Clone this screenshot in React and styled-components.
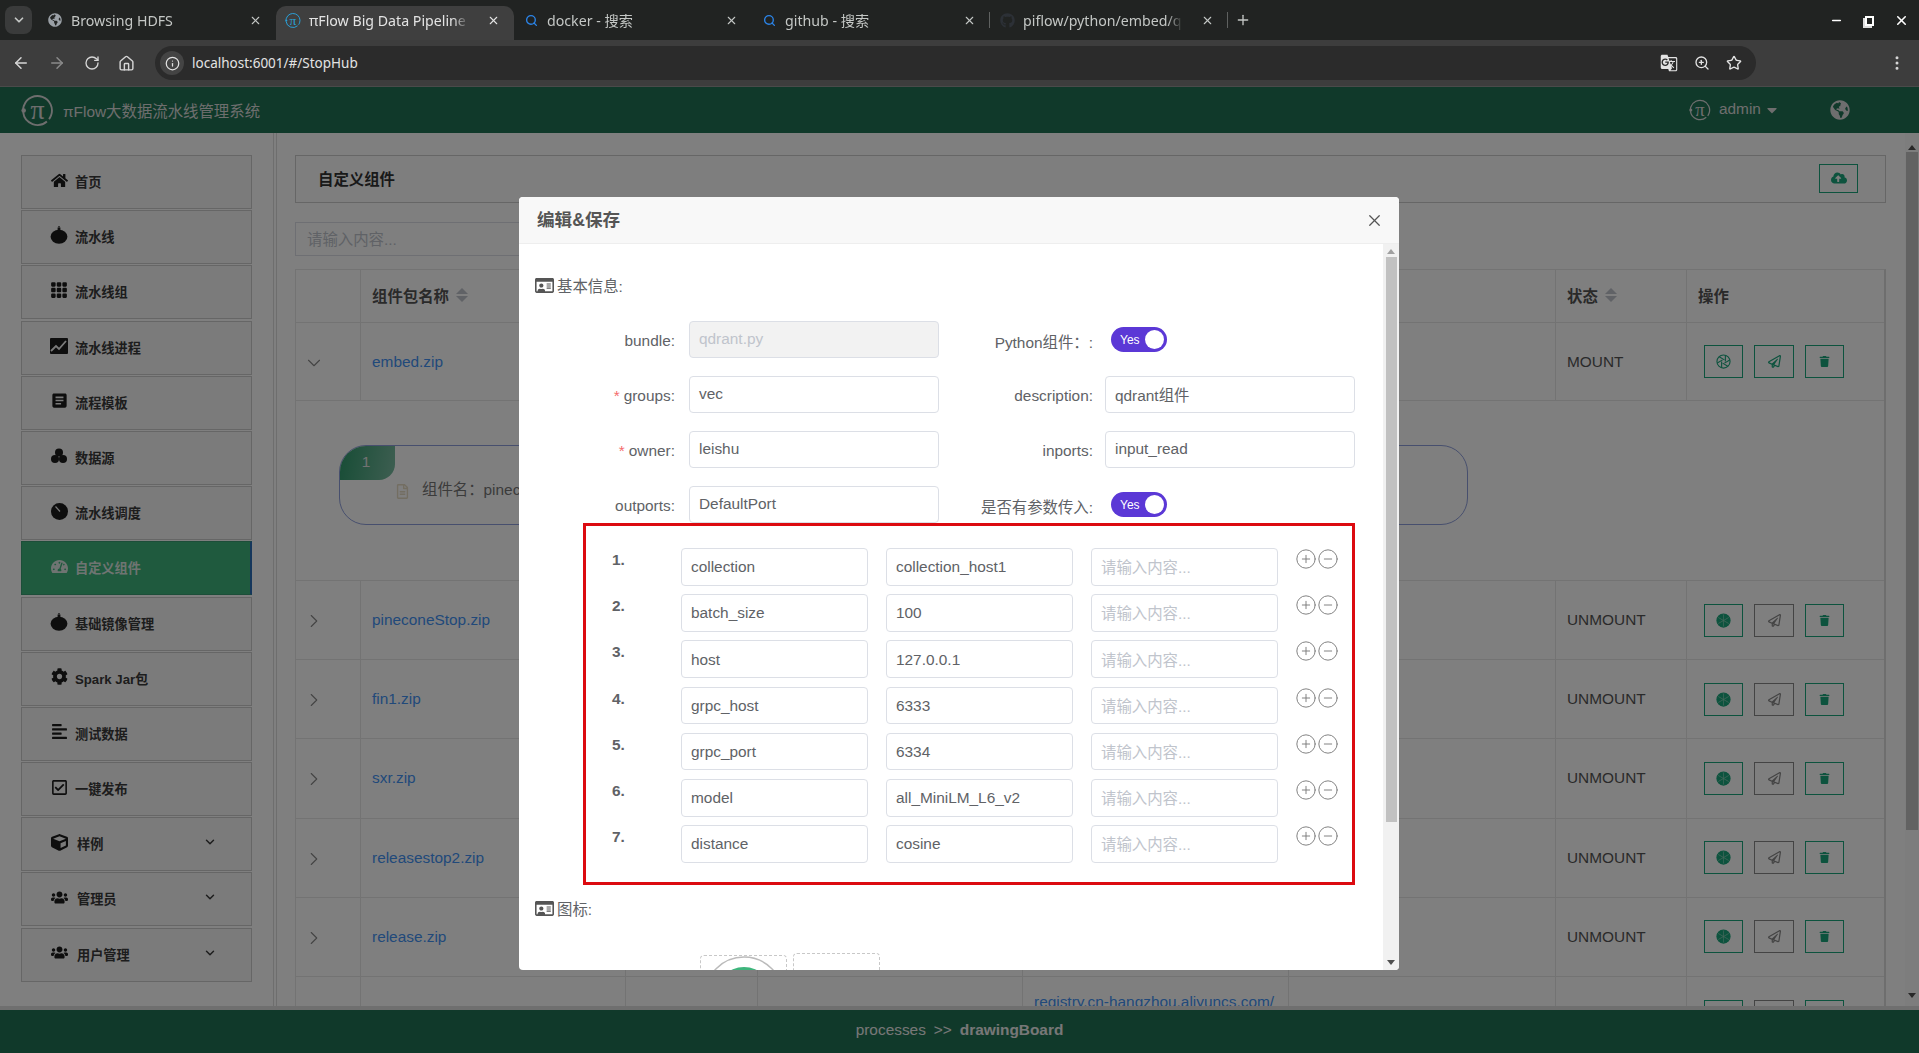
import styled, { createGlobalStyle } from "styled-components";
import {
  ArrowLeft, ArrowRight, RotateCw, House, Info, ZoomIn, Star, EllipsisVertical, Search, X, Plus, Minus,
  ChevronDown, ChevronRight, CirclePlus, CircleMinus,
} from "lucide-react";
import {
  FaHome, FaCube, FaUsers, FaCog, FaAlignLeft, FaRegCheckSquare, FaTachometerAlt,
  FaCloudUploadAlt, FaRegPaperPlane, FaTrash, FaRegIdCard, FaGlobeAmericas, FaCaretDown, FaGithub, FaRegFileAlt,
} from "react-icons/fa";
import { BsGrid3X3GapFill } from "react-icons/bs";
import { MdArticle, MdGTranslate } from "react-icons/md";

const SANS = `"Liberation Sans", "Noto Sans CJK SC", sans-serif`;
const GREEN = "#1aa67c";

const GlobalStyle = createGlobalStyle`
  html, body { margin: 0; padding: 0; overflow: hidden; background: #fff; }
  * { box-sizing: border-box; }
`;

const Page = styled.div`
  width: 1919px;
  height: 1053px;
  overflow: hidden;
  font-family: ${SANS};
  display: flex;
  flex-direction: column;
`;

/* browser chrome */
const TabStrip = styled.div`
  height: 40px;
  background: #212322;
  display: flex;
  align-items: flex-end;
  padding-left: 5px;
  font-family: "Noto Sans", "Noto Sans CJK SC", sans-serif;
  font-size: 14.2px;
  color: #c4c7c5;
`;
const TabMenu = styled.div`
  width: 27px;
  height: 28px;
  margin: 0 6px 6px 0;
  border-radius: 8px;
  background: #3a3b3b;
  display: flex;
  align-items: center;
  justify-content: center;
`;
const Tab = styled.div`
  width: 238px;
  height: 34px;
  display: flex;
  align-items: center;
  position: relative;
  padding: 0 0 6px 9px;
  border-radius: 10px 10px 0 0;
  background: ${(p) => (p.$active ? "#3f3f3f" : "transparent")};
  color: ${(p) => (p.$active ? "#e3e3e3" : "#c4c7c5")};
  &::after {
    content: "";
    display: ${(p) => (p.$sep ? "block" : "none")};
    position: absolute;
    right: 0;
    top: 6px;
    height: 16px;
    width: 1px;
    background: #5f6160;
  }
`;
const TabIcon = styled.span`
  width: 16px;
  height: 16px;
  display: flex;
  align-items: center;
  justify-content: center;
  margin-right: 8px;
  flex: none;
`;
const TabTitle = styled.span`
  width: 160px;
  flex: none;
  white-space: nowrap;
  overflow: hidden;
  -webkit-mask-image: linear-gradient(to right, #000 90%, transparent);
  mask-image: linear-gradient(to right, #000 90%, transparent);
`;
const TabClose = styled.span`
  margin-left: 18px;
  display: flex;
`;
const NewTab = styled.div`
  margin: 0 0 12px 7px;
  display: flex;
`;
const WindowControls = styled.div`
  margin: 0 10px 12px auto;
  display: flex;
  gap: 20px;
  align-items: center;
  color: #fff;
`;
const RestoreIcon = styled.span`
  width: 9px;
  height: 10px;
  border: 2px solid #fff;
  box-shadow: -2px 2px 0 #ddd;
  margin-left: 2px;
`;
const Toolbar = styled.div`
  height: 47px;
  background: #3d3d3d;
  border-bottom: 1px solid #4a4a4a;
  display: flex;
  align-items: center;
  padding-left: 12px;
  color: #d6d6d6;
`;
const NavIcons = styled.div`
  display: flex;
  gap: 18px;
  width: 143px;
  align-items: center;
`;
const Omnibox = styled.div`
  width: 1601px;
  height: 34px;
  border-radius: 17px;
  background: #2b2b2b;
  display: flex;
  align-items: center;
  padding: 0 14px 0 5px;
  color: #e3e3e3;
`;
const InfoBubble = styled.div`
  width: 24px;
  height: 24px;
  border-radius: 50%;
  background: #444;
  display: flex;
  align-items: center;
  justify-content: center;
  margin-right: 8px;
`;
const Url = styled.span`
  font-family: "Noto Sans", sans-serif;
  font-size: 13.5px;
  flex: 1;
`;
const OmniIcons = styled.div`
  display: flex;
  gap: 16px;
  align-items: center;
`;
const MoreBtn = styled.div`
  margin-left: 132px;
  display: flex;
`;

/* the app below the chrome */
const Viewport = styled.div`
  position: relative;
  height: 966px;
  overflow: hidden;
  display: flex;
  flex-direction: column;
`;
const AppHeader = styled.header`
  height: 46px;
  flex: none;
  background: #217355;
  color: #dcdcdc;
  display: flex;
  align-items: center;
  padding-left: 21px;
  font-size: 15.4px;
`;
const AppTitle = styled.span`
  margin-left: 9px;
  padding-bottom: 1px;
`;
const UserArea = styled.div`
  margin-left: auto;
  display: flex;
  align-items: center;
  width: 230px;
  font-size: 15.4px;
`;
const UserName = styled.span`
  margin: 0 3px 2px 8px;
`;
const GlobeWrap = styled.span`
  margin-left: 50px;
  display: flex;
`;
const Middle = styled.div`
  flex: 1;
  display: flex;
  min-height: 0;
  background: #fff;
  border-bottom: 4px solid #dedede;
`;
const Sidebar = styled.nav`
  width: 273px;
  flex: none;
  padding: 22px 0 0 21px;
  display: flex;
  flex-direction: column;
  gap: 1.2px;
`;
const NavItem = styled.div`
  width: 231px;
  height: 54px;
  flex: none;
  display: flex;
  align-items: center;
  padding: 0 0 1px 27px;
  border: 1px solid ${(p) => (p.$active ? "#3a9c72" : "#ccc")};
  border-right: ${(p) => (p.$active ? "2px solid #2a6fb8" : "1px solid #ccc")};
  background: ${(p) => (p.$active ? "#3eb57c" : "#f6f6f6")};
  color: ${(p) => (p.$active ? "#dfe9e4" : "#3a3a3a")};
  font-size: 13.2px;
  font-weight: 700;
`;
const NavIcon = styled.span`
  width: 20px;
  height: 20px;
  display: flex;
  align-items: center;
  justify-content: center;
  margin: -3px 6px 0 0;
  color: ${(p) => (p.$active ? "#dfe9e4" : "#1c1c1c")};
  font-size: 17px;
`;
const NavCaret = styled.span`
  margin: -3px 0 0 auto;
  padding-right: 34px;
  display: flex;
`;
const SubLabel = styled.span`
  margin-left: 2px;
`;
const Divider = styled.div`
  width: 4px;
  flex: none;
  border-left: 1px solid #ddd;
  border-right: 1px solid #ddd;
`;
const Main = styled.main`
  flex: 1;
  min-width: 0;
  padding: 22px 19px 0 18px;
  overflow: hidden;
`;
const TitlePanel = styled.div`
  height: 48px;
  border: 1px solid #ccc;
  background: #fcfcfc;
  display: flex;
  align-items: center;
  justify-content: space-between;
  padding: 0 27px 2px 22px;
  font-size: 15.4px;
  font-weight: 700;
  color: #333;
`;
const OutlineBtn = styled.div`
  width: ${(p) => p.$w || 39}px;
  height: ${(p) => p.$h || 33}px;
  border: 1px solid ${(p) => (p.$plain ? "#888" : GREEN)};
  color: ${(p) => (p.$plain ? "#888" : GREEN)};
  display: flex;
  align-items: center;
  justify-content: center;
  font-size: 13px;
  flex: none;
`;
const SearchBox = styled.div`
  width: 320px;
  height: 34px;
  margin-top: 19px;
  border: 1px solid #dcdfe6;
  padding: 0 0 2px 11px;
  display: flex;
  align-items: center;
  font-size: 15.4px;
  color: #c0c4cc;
`;
const Table = styled.div`
  margin-top: 13px;
  border-top: 1px solid #e6e6e6;
  border-left: 1px solid #e6e6e6;
  border-right: 2px solid #dcdcdc;
  color: #555;
  font-size: 15.4px;
`;
const Row = styled.div`
  display: grid;
  grid-template-columns: 64px 265px 132px 265px 266px 267px 131px 1fr;
  height: ${(p) => p.$h}px;
  border-bottom: 1px solid #e6e6e6;
`;
const Cell = styled.div`
  display: flex;
  align-items: ${(p) => (p.$top ? "flex-start" : "center")};
  padding: ${(p) => (p.$top ? "16px 11px 0" : "0 11px")};
  border-left: ${(p) => (p.$first ? "none" : "1px solid #e6e6e6")};
`;
const HeadCell = styled(Cell)`
  font-weight: 700;
  color: #555;
  padding-bottom: 2px;
`;
const SortCaret = styled.span`
  display: inline-flex;
  flex-direction: column;
  gap: 2px;
  margin-left: 7px;
  &::before, &::after {
    content: "";
    width: 0;
    height: 0;
    border-left: 6px solid transparent;
    border-right: 6px solid transparent;
  }
  &::before { border-bottom: 6px solid #c0c4cc; }
  &::after { border-top: 6px solid #c0c4cc; }
`;
const ExpandCell = styled(Cell)`
  padding: 2px 0 0 7px;
  color: #888;
`;
const FileLink = styled.a`
  color: #4393f5;
  white-space: nowrap;
`;
const Actions = styled(Cell)`
  gap: 11px;
  padding: ${(p) => (p.$top ? "23px 0 0 17px" : "0 0 0 17px")};
`;
const ExpandRow = styled.div`
  height: 180px;
  padding: 44px 0 0 43px;
  border-bottom: 1px solid #e6e6e6;
`;
const StopCard = styled.div`
  width: 1129px;
  height: 80px;
  border: 1px solid #8f9fdc;
  border-radius: 27px;
  overflow: hidden;
  color: #777;
`;
const CardBadge = styled.div`
  width: 55px;
  height: 34px;
  background: linear-gradient(100deg, #2f9a6c, #7cbda3);
  border-bottom-right-radius: 16px;
  color: #e4e4e4;
  display: flex;
  align-items: center;
  justify-content: center;
  padding: 0 3px 2px 0;
`;
const CardLine = styled.div`
  display: flex;
  align-items: center;
  gap: 12px;
  margin: -3px 0 0 55px;
`;
const DocIcon = styled.span`
  color: #e7dcc4;
  display: flex;
  font-size: 15px;
  margin-top: 6px;
`;
const PageScroll = styled.div`
  width: 14px;
  flex: none;
  display: flex;
  flex-direction: column;
  align-items: center;
  background: #fbfbfb;
  padding-top: 12px;
`;
const Arrow = styled.span`
  width: 0;
  height: 0;
  border-left: 4px solid transparent;
  border-right: 4px solid transparent;
  border-${(p) => (p.$up ? "bottom" : "top")}: 5px solid ${(p) => p.$c || "#505050"};
`;
const PageThumb = styled.div`
  width: 12px;
  height: 678px;
  margin: 2px 0 auto;
  background: #c4c4c4;
`;
const PageArrowDown = styled(Arrow)`
  margin-bottom: 8px;
`;
const AppFooter = styled.footer`
  height: 43px;
  flex: none;
  background: #217355;
  color: #efefef;
  display: flex;
  align-items: center;
  justify-content: center;
  gap: 8px;
  padding-bottom: 3px;
  font-size: 15.4px;
`;
const Crumb = styled.b`
  font-weight: 700;
`;

/* dialog over the page */
const Backdrop = styled.div`
  position: absolute;
  inset: 0;
  background: rgba(0, 0, 0, 0.5);
`;
const Modal = styled.div`
  position: absolute;
  left: 519px;
  top: 110px;
  width: 880px;
  height: 773px;
  background: #fff;
  border-radius: 4px;
  overflow: hidden;
  display: flex;
  flex-direction: column;
  color: #606266;
  font-size: 15.4px;
`;
const ModalHead = styled.div`
  height: 47px;
  flex: none;
  background: #f8f8f8;
  border-bottom: 1px solid #eee;
  display: flex;
  align-items: center;
  justify-content: space-between;
  padding: 0 15px 3px 18px;
  font-size: 17.6px;
  font-weight: 700;
  color: #555;
`;
const CloseIcon = styled.span`
  display: flex;
  margin-top: 3px;
`;
const ModalBody = styled.div`
  flex: 1;
  min-height: 0;
  display: flex;
`;
const ModalContent = styled.div`
  flex: 1;
  min-width: 0;
  padding: 29px 0 0 16px;
  overflow: hidden;
`;
const SectionTitle = styled.div`
  height: 24px;
  display: flex;
  align-items: center;
  gap: 3px;
  color: #606266;
`;
const SectionIcon = styled.span`
  display: flex;
  font-size: 19px;
  color: #555;
`;
const FormGrid = styled.div`
  display: grid;
  grid-template-columns: 154px 250px 166px 250px;
  grid-auto-rows: 37px;
  row-gap: 18px;
  margin-top: 24px;
`;
const FieldLabel = styled.label`
  display: flex;
  align-items: center;
  justify-content: flex-end;
  padding: 3px ${(p) => (p.$right ? 12 : 14)}px 0 0;
  white-space: nowrap;
`;
const Required = styled.span`
  color: #f56c6c;
  margin-right: 4px;
`;
const Field = styled.div`
  height: ${(p) => p.$h || 37}px;
  border: 1px solid #dcdfe6;
  border-radius: 4px;
  background: ${(p) => (p.$disabled ? "#f2f2f2" : "#fff")};
  color: ${(p) => (p.$disabled || p.$empty ? "#c0c4cc" : "#606266")};
  padding: 0 9px 1px;
  display: flex;
  align-items: center;
  white-space: nowrap;
  overflow: hidden;
`;
const ParamField = styled(Field)`
  height: 37.6px;
  padding: ${(p) => (p.$empty ? "0 9px 1px" : "1px 9px 0")};
`;
const Toggle = styled.div`
  width: 56px;
  height: 25px;
  margin: 6px 0 0 6px;
  border-radius: 13px;
  background: #5b38d6;
  color: #fff;
  font-size: 12px;
  display: flex;
  align-items: center;
  justify-content: space-between;
  padding: 0 3px 0 9px;
  &::after {
    content: "";
    width: 19px;
    height: 19px;
    border-radius: 50%;
    background: #fff;
  }
`;
const ParamBox = styled.div`
  width: 772px;
  height: 362px;
  margin-left: 48px;
  border: 3px solid #dc0a10;
  padding: 22px 0 0 26px;
  display: flex;
  flex-direction: column;
  gap: 8.6px;
`;
const ParamRow = styled.div`
  display: flex;
  align-items: flex-start;
`;
const ParamNo = styled.div`
  width: 69px;
  line-height: 24px;
  font-weight: 700;
  color: #606266;
`;
const ParamInputs = styled.div`
  display: grid;
  grid-template-columns: repeat(3, 187px);
  column-gap: 18px;
`;
const ParamActions = styled.div`
  display: flex;
  margin: 0 0 0 17px;
  color: #777;
`;
const IconTitle = styled(SectionTitle)`
  margin-top: 11px;
`;
const Previews = styled.div`
  display: flex;
  align-items: flex-start;
  gap: 6px;
  margin: 33px 0 0 165px;
`;
const PreviewBox = styled.div`
  width: 87px;
  height: 87px;
  margin-top: ${(p) => p.$mt || 0}px;
  border: 1px dashed #c8c8c8;
  border-radius: 4px;
  display: flex;
  justify-content: center;
`;
const ModalScroll = styled.div`
  width: 16px;
  flex: none;
  background: #f1f1f1;
  display: flex;
  flex-direction: column;
  align-items: center;
  padding-top: 5px;
`;
const ModalThumb = styled.div`
  width: 11px;
  height: 565px;
  margin: 3px 0 auto;
  background: #c1c1c1;
`;
const ModalArrowDown = styled(Arrow)`
  margin-bottom: 5px;
`;

function Logo({ size = 32, ring = "currentColor" }) {
  return (
    <svg width={size} height={size} viewBox="0 0 32 32" fill="none">
      <circle cx="16" cy="16" r="14" stroke={ring} strokeWidth="1.8" strokeDasharray="26 3 30 3 26" transform="rotate(-70 16 16)" />
      <circle cx="2.6" cy="16" r="2.2" fill={ring} />
      <text x="16" y="24" textAnchor="middle" fontSize="27" fontFamily="Liberation Serif, serif" fill={ring}>π</text>
    </svg>
  );
}

function Aperture({ filled, size = 15 }) {
  const spokes = [0, 60, 120, 180, 240, 300];
  return (
    <svg width={size} height={size} viewBox="0 0 16 16">
      <circle cx="8" cy="8" r="7" fill={filled ? GREEN : "none"} stroke={GREEN} strokeWidth="1.2" />
      {spokes.map((deg) => (
        <line key={deg} x1="8" y1="8" x2="8" y2="1.5" transform={`rotate(${deg} 8 8) translate(${filled ? 0 : 2} 0)`}
          stroke={filled ? "#8fd0b8" : GREEN} strokeWidth={filled ? 0.7 : 1.2} />
      ))}
    </svg>
  );
}

function ChartIcon() {
  return (
    <svg width="18" height="16" viewBox="0 0 18 16">
      <rect width="18" height="16" rx="1" fill="currentColor" />
      <path d="M1 13l5-5 3 3 7-8" stroke="#f6f6f6" strokeWidth="1.8" fill="none" />
    </svg>
  );
}

function ThreeDots() {
  return (
    <svg width="16" height="16" viewBox="0 0 16 16" fill="currentColor">
      <circle cx="8" cy="4.6" r="4" />
      <circle cx="4" cy="11" r="4" />
      <circle cx="12" cy="11" r="4" />
    </svg>
  );
}

function ClockIcon() {
  return (
    <svg width="17" height="17" viewBox="0 0 17 17">
      <circle cx="8.5" cy="8.5" r="8.5" fill="currentColor" />
      <path d="M4.5 3.5l4.5 5" stroke="#f6f6f6" strokeWidth="1.2" />
    </svg>
  );
}

function BombIcon() {
  return (
    <svg width="18" height="18" viewBox="0 0 18 18" fill="currentColor">
      <ellipse cx="9" cy="10.8" rx="8.4" ry="7" />
      <rect x="7.6" y="1.5" width="2.8" height="3" />
      <circle cx="9" cy="0.8" r="0.8" />
    </svg>
  );
}

const navItems = [
  { label: "首页", icon: <FaHome /> },
  { label: "流水线", icon: <BombIcon /> },
  { label: "流水线组", icon: <BsGrid3X3GapFill size={18} /> },
  { label: "流水线进程", icon: <ChartIcon /> },
  { label: "流程模板", icon: <MdArticle size={19} /> },
  { label: "数据源", icon: <ThreeDots /> },
  { label: "流水线调度", icon: <ClockIcon /> },
  { label: "自定义组件", icon: <FaTachometerAlt />, active: true },
  { label: "基础镜像管理", icon: <BombIcon /> },
  { label: "Spark Jar包", icon: <FaCog /> },
  { label: "测试数据", icon: <FaAlignLeft /> },
  { label: "一键发布", icon: <FaRegCheckSquare /> },
  { label: "样例", icon: <FaCube />, sub: true },
  { label: "管理员", icon: <FaUsers />, sub: true },
  { label: "用户管理", icon: <FaUsers />, sub: true },
];

const zipRows = ["pineconeStop.zip", "fin1.zip", "sxr.zip", "releasestop2.zip", "release.zip"];

const params = [
  ["collection", "collection_host1"],
  ["batch_size", "100"],
  ["host", "127.0.0.1"],
  ["grpc_host", "6333"],
  ["grpc_port", "6334"],
  ["model", "all_MiniLM_L6_v2"],
  ["distance", "cosine"],
];

function RowActions({ mounted, top }) {
  return (
    <Actions $top={top}>
      <OutlineBtn><Aperture filled={!mounted} /></OutlineBtn>
      <OutlineBtn $w={40} $plain={!mounted}><FaRegPaperPlane /></OutlineBtn>
      <OutlineBtn><FaTrash size={11} /></OutlineBtn>
    </Actions>
  );
}

function ChromeBar() {
  return (
    <>
      <TabStrip>
        <TabMenu><ChevronDown size={14} strokeWidth={3} /></TabMenu>
        <Tab>
          <TabIcon><FaGlobeAmericas size={14} color="#9aa0a6" /></TabIcon>
          <TabTitle>Browsing HDFS</TabTitle>
          <TabClose><X size={13} strokeWidth={2} /></TabClose>
        </Tab>
        <Tab $active>
          <TabIcon><Logo size={17} ring="#2a9fd6" /></TabIcon>
          <TabTitle>πFlow Big Data Pipeline S</TabTitle>
          <TabClose><X size={13} strokeWidth={2} /></TabClose>
        </Tab>
        <Tab>
          <TabIcon><Search size={13} color="#2b84e8" strokeWidth={2.5} /></TabIcon>
          <TabTitle>docker - 搜索</TabTitle>
          <TabClose><X size={13} strokeWidth={2} /></TabClose>
        </Tab>
        <Tab $sep>
          <TabIcon><Search size={13} color="#2b84e8" strokeWidth={2.5} /></TabIcon>
          <TabTitle>github - 搜索</TabTitle>
          <TabClose><X size={13} strokeWidth={2} /></TabClose>
        </Tab>
        <Tab $sep>
          <TabIcon><FaGithub size={15} color="#2c3036" /></TabIcon>
          <TabTitle>piflow/python/embed/q</TabTitle>
          <TabClose><X size={13} strokeWidth={2} /></TabClose>
        </Tab>
        <NewTab><Plus size={16} strokeWidth={2} /></NewTab>
        <WindowControls>
          <Minus size={13} strokeWidth={3} />
          <RestoreIcon />
          <X size={15} strokeWidth={2.5} />
        </WindowControls>
      </TabStrip>
      <Toolbar>
        <NavIcons>
          <ArrowLeft size={18} />
          <ArrowRight size={18} color="#8a8a8a" />
          <RotateCw size={16} />
          <House size={17} />
        </NavIcons>
        <Omnibox>
          <InfoBubble><Info size={15} /></InfoBubble>
          <Url>localhost:6001/#/StopHub</Url>
          <OmniIcons>
            <MdGTranslate size={18} />
            <ZoomIn size={16} />
            <Star size={16} />
          </OmniIcons>
        </Omnibox>
        <MoreBtn><EllipsisVertical size={18} /></MoreBtn>
      </Toolbar>
    </>
  );
}

function SideNav() {
  return (
    <Sidebar>
      {navItems.map((item) => (
        <NavItem key={item.label} $active={item.active}>
          <NavIcon $active={item.active}>{item.icon}</NavIcon>
          {item.sub ? <SubLabel>{item.label}</SubLabel> : item.label}
          {item.sub && <NavCaret><ChevronDown size={14} strokeWidth={2.5} /></NavCaret>}
        </NavItem>
      ))}
    </Sidebar>
  );
}

function StopTable() {
  return (
    <Table>
      <Row $h={53}>
        <HeadCell $first />
        <HeadCell>组件包名称<SortCaret /></HeadCell>
        <HeadCell /><HeadCell /><HeadCell /><HeadCell />
        <HeadCell>状态<SortCaret /></HeadCell>
        <HeadCell>操作</HeadCell>
      </Row>
      <Row $h={78}>
        <ExpandCell $first><ChevronDown size={22} strokeWidth={1.2} /></ExpandCell>
        <Cell><FileLink>embed.zip</FileLink></Cell>
        <Cell /><Cell /><Cell /><Cell />
        <Cell>MOUNT</Cell>
        <RowActions mounted />
      </Row>
      <ExpandRow>
        <StopCard>
          <CardBadge>1</CardBadge>
          <CardLine>
            <DocIcon><FaRegFileAlt /></DocIcon>
            <span>组件名：pineconeStop</span>
          </CardLine>
        </StopCard>
      </ExpandRow>
      {zipRows.map((name) => (
        <Row key={name} $h={79.2}>
          <ExpandCell $first><ChevronRight size={22} strokeWidth={1.2} /></ExpandCell>
          <Cell><FileLink>{name}</FileLink></Cell>
          <Cell /><Cell /><Cell /><Cell />
          <Cell>UNMOUNT</Cell>
          <RowActions />
        </Row>
      ))}
      <Row $h={120}>
        <Cell $first /><Cell /><Cell /><Cell />
        <Cell $top><FileLink>registry.cn-hangzhou.aliyuncs.com/</FileLink></Cell>
        <Cell /><Cell />
        <RowActions top />
      </Row>
    </Table>
  );
}

function EditDialog() {
  return (
    <Modal>
      <ModalHead>
        编辑&保存
        <CloseIcon><X size={19} strokeWidth={1.6} color="#555" /></CloseIcon>
      </ModalHead>
      <ModalBody>
        <ModalContent>
          <SectionTitle><SectionIcon><FaRegIdCard /></SectionIcon>基本信息:</SectionTitle>
          <FormGrid>
            <FieldLabel>bundle:</FieldLabel>
            <Field $disabled>qdrant.py</Field>
            <FieldLabel $right>Python组件：:</FieldLabel>
            <Toggle>Yes</Toggle>
            <FieldLabel><Required>*</Required>groups:</FieldLabel>
            <Field>vec</Field>
            <FieldLabel $right>description:</FieldLabel>
            <Field>qdrant组件</Field>
            <FieldLabel><Required>*</Required>owner:</FieldLabel>
            <Field>leishu</Field>
            <FieldLabel $right>inports:</FieldLabel>
            <Field>input_read</Field>
            <FieldLabel>outports:</FieldLabel>
            <Field>DefaultPort</Field>
            <FieldLabel $right>是否有参数传入:</FieldLabel>
            <Toggle>Yes</Toggle>
          </FormGrid>
          <ParamBox>
            {params.map(([key, value], i) => (
              <ParamRow key={key}>
                <ParamNo>{i + 1}.</ParamNo>
                <ParamInputs>
                  <ParamField>{key}</ParamField>
                  <ParamField>{value}</ParamField>
                  <ParamField $empty>请输入内容...</ParamField>
                </ParamInputs>
                <ParamActions>
                  <CirclePlus size={22} strokeWidth={1} />
                  <CircleMinus size={22} strokeWidth={1} />
                </ParamActions>
              </ParamRow>
            ))}
          </ParamBox>
          <IconTitle><SectionIcon><FaRegIdCard /></SectionIcon>图标:</IconTitle>
          <Previews>
            <PreviewBox $mt={2}>
              <svg width="80" height="80" viewBox="0 0 80 80" fill="none">
                <circle cx="40" cy="40" r="39" stroke="#bbb" strokeWidth="1.5" />
                <circle cx="40" cy="40" r="29" fill="#3eb57c" />
              </svg>
            </PreviewBox>
            <PreviewBox />
          </Previews>
        </ModalContent>
        <ModalScroll>
          <Arrow $up $c="#a0a0a0" />
          <ModalThumb />
          <ModalArrowDown />
        </ModalScroll>
      </ModalBody>
    </Modal>
  );
}

export default function App() {
  return (
    <Page>
      <GlobalStyle />
      <ChromeBar />
      <Viewport>
        <AppHeader>
          <Logo size={33} />
          <AppTitle>πFlow大数据流水线管理系统</AppTitle>
          <UserArea>
            <Logo size={22} />
            <UserName>admin</UserName>
            <FaCaretDown size={16} />
            <GlobeWrap><FaGlobeAmericas size={20} /></GlobeWrap>
          </UserArea>
        </AppHeader>
        <Middle>
          <SideNav />
          <Divider />
          <Main>
            <TitlePanel>
              自定义组件
              <OutlineBtn $h={29}><FaCloudUploadAlt size={16} /></OutlineBtn>
            </TitlePanel>
            <SearchBox>请输入内容...</SearchBox>
            <StopTable />
          </Main>
          <PageScroll>
            <Arrow $up />
            <PageThumb />
            <PageArrowDown />
          </PageScroll>
        </Middle>
        <AppFooter>
          <span>processes</span>
          <span>&gt;&gt;</span>
          <Crumb>drawingBoard</Crumb>
        </AppFooter>
        <Backdrop />
        <EditDialog />
      </Viewport>
    </Page>
  );
}
